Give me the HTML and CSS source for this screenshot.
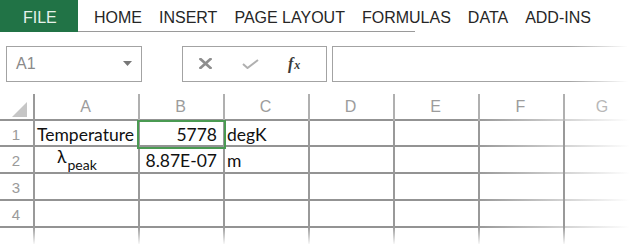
FILE: index.html
```html
<!DOCTYPE html>
<html lang="en">

<head>
    <meta charset="UTF-8">
    <title>Book1 - Excel</title>
    <link rel="stylesheet" href="styles.css">
</head>

<body>
    <!-- Ribbon tabs -->
    <nav class="ribbon">
        <div class="tab-file">FILE</div>
        <ul class="tabs">
            <li>HOME</li>
            <li>INSERT</li>
            <li>PAGE LAYOUT</li>
            <li>FORMULAS</li>
            <li>DATA</li>
            <li>ADD-INS</li>
        </ul>
    </nav>

    <!-- Name box + formula bar -->
    <div class="toolbar">
        <div class="name-box">
            <span>A1</span>
            <svg class="caret" width="9" height="5" viewBox="0 0 9 5"><path d="M0 0h9L4.5 5z" fill="#777"/></svg>
        </div>
        <div class="fx-box">
            <svg class="icon-cancel" width="13" height="11" viewBox="0 0 13 11">
                <path d="M1.5 1l10 9M11.5 1l-10 9" stroke="#8e8e8e" stroke-width="2.6" stroke-linecap="square"/>
            </svg>
            <svg class="icon-enter" width="17" height="10" viewBox="0 0 17 10">
                <path d="M1 5l4.5 4L16 1" stroke="#b0b0b0" stroke-width="2" fill="none"/>
            </svg>
            <span class="fx">f<small>x</small></span>
        </div>
        <div class="formula-bar"></div>
    </div>

    <!-- Worksheet -->
    <div class="sheet">
        <div class="row head">
            <div class="rh corner"><span class="tri"></span></div>
            <div class="c">A</div>
            <div class="c">B</div>
            <div class="c">C</div>
            <div class="c">D</div>
            <div class="c">E</div>
            <div class="c">F</div>
            <div class="c last">G</div>
        </div>
        <div class="row first">
            <div class="rh">1</div>
            <div class="c txt">Temperature</div>
            <div class="c num active">5778</div>
            <div class="c txt">degK</div>
            <div class="c"></div>
            <div class="c"></div>
            <div class="c"></div>
            <div class="c last"></div>
        </div>
        <div class="row">
            <div class="rh">2</div>
            <div class="c txt lambda">&lambda;<sub>peak</sub></div>
            <div class="c num">8.87E-07</div>
            <div class="c txt">m</div>
            <div class="c"></div>
            <div class="c"></div>
            <div class="c"></div>
            <div class="c last"></div>
        </div>
        <div class="row">
            <div class="rh">3</div>
            <div class="c"></div>
            <div class="c"></div>
            <div class="c"></div>
            <div class="c"></div>
            <div class="c"></div>
            <div class="c"></div>
            <div class="c last"></div>
        </div>
        <div class="row">
            <div class="rh">4</div>
            <div class="c"></div>
            <div class="c"></div>
            <div class="c"></div>
            <div class="c"></div>
            <div class="c"></div>
            <div class="c"></div>
            <div class="c last"></div>
        </div>
        <div class="row tail">
            <div class="rh"></div>
            <div class="c"></div>
            <div class="c"></div>
            <div class="c"></div>
            <div class="c"></div>
            <div class="c"></div>
            <div class="c"></div>
            <div class="c last"></div>
        </div>
    </div>
</body>

</html>
```

FILE: styles.css
```css
/* Page */
body {
    margin: 0;
    background-color: #fff;
    font-family: "Liberation Sans", Arial, sans-serif;
    width: 640px;
    height: 244px;
    overflow: hidden;
}

/* Ribbon tabs */
.ribbon {
    display: flex;
    height: 32px;
}

.tab-file {
    width: 78px;
    background-color: #217346;
    color: #e6f2ea;
    font-size: 16px;
    line-height: 36px;
    padding-left: 23px;
    box-sizing: border-box;
}

.tabs {
    flex: 1;
    display: flex;
    gap: 17px;
    margin: 0;
    padding: 0 0 0 16px;
    list-style: none;
    font-size: 16px;
    line-height: 36px;
    color: #262626;
    background: linear-gradient(to right, #9a9a9a 60%, rgba(154, 154, 154, 0) 307px) left bottom / 100% 1px no-repeat;
}

/* Name box + formula bar */
.toolbar {
    display: flex;
    height: 36px;
    margin-top: 14px;
    padding-left: 6px;
}

.name-box {
    width: 136px;
    border: 1px solid #a3a3a3;
    box-sizing: border-box;
    display: flex;
    align-items: center;
    justify-content: space-between;
    padding: 0 9px 0 9px;
    font-size: 16px;
    color: #8a8a8a;
}

.caret {
    margin-top: -2px;
}

.fx-box {
    width: 145px;
    margin-left: 40px;
    border: 1px solid #a3a3a3;
    box-sizing: border-box;
    display: flex;
    align-items: center;
    padding-left: 16px;
}

.icon-cancel {
    margin-top: -1px;
}

.icon-enter {
    margin-left: 30px;
    margin-top: -1px;
}

.fx {
    margin-left: 29px;
    font-family: "Liberation Serif", serif;
    font-style: italic;
    font-weight: bold;
    font-size: 16px;
    color: #3a3a3a;
}

.fx small {
    font-size: 12px;
    margin-left: 1px;
}

.formula-bar {
    width: 295px;
    margin-left: 5px;
    border-left: 1px solid #a3a3a3;
    background:
        linear-gradient(to right, #a3a3a3 80%, rgba(163, 163, 163, 0)) left top / 100% 1px no-repeat,
        linear-gradient(to right, #a3a3a3 80%, rgba(163, 163, 163, 0)) left bottom / 100% 1px no-repeat;
}

/* Worksheet */
.sheet {
    margin-top: 12px;
}

.row {
    display: grid;
    grid-template-columns: 34px 105px 85px 85px 85px 85px 85px 76px;
    height: 27px;
    background: linear-gradient(to right, #939393 470px, rgba(147, 147, 147, 0) 630px) left bottom / 100% 2px no-repeat;
}

.row.first {
    height: 26px;
}

.row .c,
.row .rh {
    border-right: 2px solid #999;
    margin-right: -1px;
    margin-left: -1px;
    position: relative;
}

.row .c.last {
    border-right: none;
}

.rh {
    font-size: 15px;
    color: #9a9a9a;
    text-align: center;
    line-height: 27px;
}

.head .c {
    font-size: 16px;
    color: #9c9c9c;
    text-align: center;
    line-height: 26px;
    border-right-color: #b0b0b0;
}

.head .c.last {
    color: #b8b8b8;
}

.corner {
    position: relative;
}

.tri {
    position: absolute;
    left: 13px;
    bottom: 4px;
    width: 0;
    height: 0;
    border-left: 15px solid transparent;
    border-bottom: 15px solid #c6c6c6;
}

.txt,
.num {
    font-family: Lato, "Open Sans", sans-serif;
    font-size: 17.5px;
    color: #111;
    line-height: 27px;
    padding: 0 4px;
    white-space: nowrap;
}

.num {
    text-align: right;
    padding-right: 6px;
}

.active {
    outline: 2px solid #4a9a52;
    outline-offset: -1px;
    z-index: 1;
}

.lambda {
    padding-left: 24px;
    line-height: 20px;
}

.lambda sub {
    font-size: 14px;
    vertical-align: -7px;
    margin-left: 1px;
}

.tail {
    height: 16px;
    background: none;
}

.tail .c,
.tail .rh {
    border-right: 2px solid transparent;
    border-image: linear-gradient(#999, rgba(153, 153, 153, 0)) 1;
}

.tail .c.last {
    border-right: none;
}
```
